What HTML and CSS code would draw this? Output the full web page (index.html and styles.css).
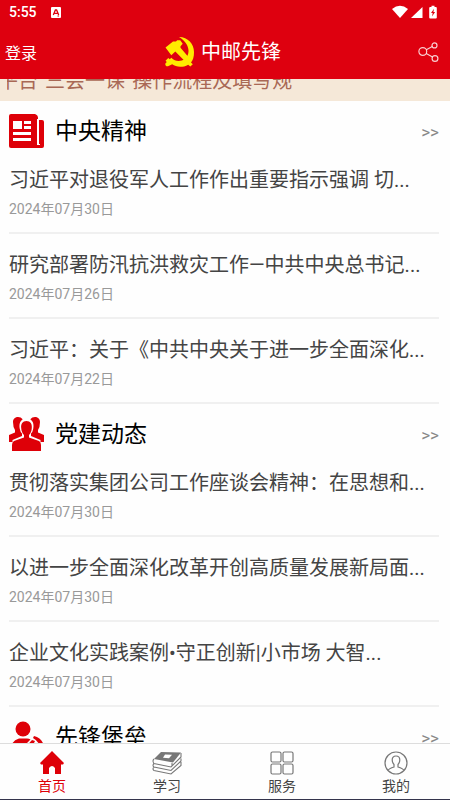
FILE: index.html
```html
<!DOCTYPE html>
<html lang="zh-CN">
<head>
<meta charset="utf-8">
<meta name="viewport" content="width=device-width, initial-scale=1">
<title>中邮先锋</title>
<link rel="stylesheet" href="styles.css">
</head>
<body>
<header class="top">
  <div class="status">
    <span class="clock">5:55</span>
    <svg class="input-mark" width="10" height="11" viewBox="0 0 10 11"><rect width="10" height="11" rx="1" fill="#fff"/><path d="M2.3 8 4.400 3h1.200l2.100 5M3.200 6.400h3.600" fill="none" stroke="#de000f" stroke-width="1.300"/><path d="M6.500 9h1.500" stroke="#de000f"/></svg>
    <svg class="signals" width="46" height="14" viewBox="0 0 46 14" fill="#fff"><path d="M0 4Q8-2.500 16 4L8 13Z"/><path d="M30.500 2v11H19Z"/><path d="M39.500 2V.8h3V2h1.300q1 0 1 1v9.500q0 1-1 1h-5.600q-1 0-1-1V3q0-1 1-1Z"/><path d="m42 3.800-3 4.100h1.700L40 11.500l3.100-4.600h-1.700Z" fill="#de000f"/></svg>
  </div>
  <div class="bar">
    <a class="login" href="#login">登录</a>
    <div class="brand">
      <svg width="32" height="32" viewBox="0 0 32 32" fill="#ffec00"><path d="M16 1C25 1 31 8 31 16c0 5-1 8-3 10.500l1.800 1.800-2.500 2.300-2.100-1.900c-5.800 3.300-12.200 2.500-16-.4L5.500 30c-1.500 1.200-4-.8-3-2.800l1.300-1.200-1.300-1.200 2.800-2.800 1.500 1.200 1.500-1.500c4.500 4.500 9.700 3.800 13.700 1C27.500 18.500 27.500 8 16 1Z"/><path d="m2.500 11.500 7.500-6h3l1.200-1.200h3l2.500 3.500-2.200 2.400v1.600L28 24l-3.800 3.500L12.300 15.500l-4 3.700Z"/></svg>
      <h1>中邮先锋</h1>
    </div>
    <button class="share" type="button" aria-label="分享"><svg width="21" height="20" viewBox="0 0 21 20" fill="none" stroke="#fff" stroke-opacity=".8" stroke-width="1.200"><circle cx="4.800" cy="9.500" r="3.900"/><circle cx="16.500" cy="3.400" r="2.500"/><circle cx="17" cy="16.500" r="2.900"/><path d="m8.300 7.700 6-3.200M8.200 11.500l6.300 3.600"/></svg></button>
  </div>
</header>

<main class="content">
  <div class="notice"><p>平台“三会一课”操作流程及填写规</p></div>

  <section class="group">
    <div class="group-head">
      <svg width="35" height="35" viewBox="0 0 35 35"><path d="M2 0h24q3 1 3 4v30H2q-2 0-2-2V2q0-2 2-2Z" fill="#de0008"/><path d="M30 6h3q2 0 2 2v24q0 2-2 2h-7V6Z" fill="#de0008"/><path d="M29 5h1v25h1v1h-3V5Z" fill="#fff"/><path d="M4 7h9v8H4ZM15 7h7v3h-7ZM15 12h7v3h-7ZM4 18h18v3H4ZM4 24h18v3H4Z" fill="#fff"/></svg>
      <h2>中央精神</h2><a class="more" href="#spirit" aria-label="更多中央精神">&gt;&gt;</a>
    </div>
    <ul>
      <li><a href="#a1">习近平对退役军人工作作出重要指示强调 切...</a><time>2024年07月30日</time></li>
      <li><a href="#a2">研究部署防汛抗洪救灾工作—中共中央总书记...</a><time>2024年07月26日</time></li>
      <li><a href="#a3">习近平：关于《中共中央关于进一步全面深化...</a><time>2024年07月22日</time></li>
    </ul>
  </section>

  <section class="group">
    <div class="group-head">
      <svg width="35" height="35" viewBox="0 0 35 35" fill="#de0008"><path id="side" d="M4 5C4 1.500 6.500 0 9 0q3 0 4.700 2.200C10.500 4.500 10 8 10.800 12q.5 3 2.200 4.500v2.500L3.500 23v2H0v-7l6-2.500V13Q4 10 4 5Z"/><use href="#side" transform="matrix(-1 0 0 1 35 0)"/><path d="M17.500 4c-4 0-5.700 3-5.300 7 .2 3 1.200 5.500 2.800 7v2.500L5 24q-2 1-2 4v6h29v-6q0-3-2-4l-10-3.500V18c1.600-1.500 2.600-4 2.800-7 .4-4-1.300-7-5.300-7Z"/></svg>
      <h2>党建动态</h2><a class="more" href="#news" aria-label="更多党建动态">&gt;&gt;</a>
    </div>
    <ul>
      <li><a href="#b1">贯彻落实集团公司工作座谈会精神：在思想和...</a><time>2024年07月30日</time></li>
      <li><a href="#b2">以进一步全面深化改革开创高质量发展新局面...</a><time>2024年07月30日</time></li>
      <li><a href="#b3">企业文化实践案例•守正创新|小市场 大智...</a><time>2024年07月30日</time></li>
    </ul>
  </section>

  <section class="group">
    <div class="group-head">
      <svg width="35" height="35" viewBox="0 0 35 35" fill="#de0008"><circle cx="14" cy="9" r="7.500"/><path d="M2 29q0-8 8-10.500h8q2 0 3.500 1L13 28v3H2Z"/><path d="m14 30 9-10 3 1-5 10Z"/><path d="M25 16q8 2 10 10l-4 3q0-7-7-11Z"/></svg>
      <h2>先锋堡垒</h2><a class="more" href="#fortress" aria-label="更多先锋堡垒">&gt;&gt;</a>
    </div>
  </section>
</main>

<nav class="tabs">
  <a class="active" href="#home"><svg width="24" height="24" viewBox="0 0 24 24" fill="#de0008"><path d="m12 0 12 12-1 1.500h-2V23h-6v-6q-3-4-6 0v6H3v-9.500H1L0 12Z"/></svg>首页</a>
  <a href="#study"><svg width="30" height="24" viewBox="0 0 30 24"><path d="m9 1 20 .5-8 10L2 8Z" fill="#777"/><path d="m13 3.500 7 .2-3 3.500-6-.5Z" fill="#fff"/><g fill="none" stroke="#777" stroke-width="1.100"><path d="M2 8q-2 2 0 4.500l17 3.500L29 6V2M20 12v3.500M2 12.500q-2 2 0 3.500l17 3.500 10-9.500V7.500M2 16q-2 2 0 3.500L19 23l10-8.500V11"/></g></svg>学习</a>
  <a href="#service"><svg width="24" height="24" viewBox="0 0 24 24" fill="none" stroke="#777" stroke-width="1.200"><rect x="1" y="1" width="10" height="10" rx="1.500"/><rect x="13" y="1" width="10" height="10" rx="1.500"/><rect x="1" y="13" width="10" height="10" rx="1.500"/><rect x="13" y="13" width="10" height="10" rx="1.500"/></svg>服务</a>
  <a href="#mine"><svg width="24" height="24" viewBox="0 0 24 24" fill="none" stroke="#777" stroke-width="1.200"><circle cx="12" cy="12" r="11"/><path d="M4 19.500q1-2 6-3.500v-2.500Q8.200 11.500 8.200 9q0-4 3.800-4t3.800 4q0 2.500-1.800 4.500V16q5 1.500 6 3.500"/></svg>我的</a>
</nav>
</body>
</html>
```
FILE: styles.css
```css
* { box-sizing: border-box; }

body {
  margin: 0;
  height: 100vh;
  display: flex;
  flex-direction: column;
  overflow: hidden;
  background: #fefefe;
  color: #444;
  font-family: Roboto, "Noto Sans CJK SC", sans-serif;
}

h1, h2, p, ul { margin: 0; padding: 0; font-weight: 400; }
ul { list-style: none; }
a { color: inherit; text-decoration: none; }
svg { display: block; flex: none; }

.top { flex: none; background: #de000f; color: #fff; }

.status {
  display: flex;
  align-items: center;
  height: 24px;
  padding: 0 12px 0 9px;
}
.clock { font-size: 14px; font-weight: 500; }
.input-mark { margin-left: 14px; }
.signals { margin-left: auto; }

.bar {
  display: grid;
  grid-template-columns: 1fr auto 1fr;
  align-items: center;
  height: 55px;
  padding: 0 11px 0 5px;
}
.login { font-size: 16px; }
.brand { display: flex; align-items: center; gap: 6px; }
.brand h1 { font-size: 20px; line-height: 30px; }
.share {
  justify-self: end;
  padding: 0;
  border: 0;
  background: none;
}

.content { flex: 1; min-height: 0; overflow: hidden; }

.notice {
  display: flex;
  align-items: flex-end;
  height: 22px;
  padding: 0 7px 7px;
  background: #f5e8d8;
  color: #a96855;
}
.notice p {
  flex: 1;
  overflow: hidden;
  white-space: nowrap;
  font-size: 20px;
  line-height: 26px;
  text-indent: -9px;
}

.group { padding: 0 11px 0 9px; }
.group-head {
  display: flex;
  align-items: flex-end;
  height: 48px;
}
.group-head h2 {
  margin-left: 11px;
  color: #000;
  font-size: 23px;
  line-height: 34px;
}
.more {
  margin-left: auto;
  color: #888;
  font-size: 17px;
  line-height: 34px;
}

.group li {
  height: 85px;
  padding-top: 16px;
  border-bottom: 2px solid #f0f0f0;
}
.group li a {
  display: block;
  overflow: hidden;
  white-space: nowrap;
  font-size: 20px;
  line-height: 30px;
}
.group time {
  display: block;
  margin-top: 4px;
  color: #999;
  font-size: 14px;
  line-height: 20px;
}

.tabs {
  flex: none;
  display: flex;
  justify-content: space-between;
  height: 57px;
  padding: 7px 40px 0 38px;
  border-top: 1px solid #ddd;
  border-bottom: 1px solid #34344c;
  background: #fefefe;
}
.tabs a {
  display: flex;
  flex-direction: column;
  align-items: center;
  font-size: 14px;
  line-height: 22px;
}
.tabs .active { color: #de0008; }
```
